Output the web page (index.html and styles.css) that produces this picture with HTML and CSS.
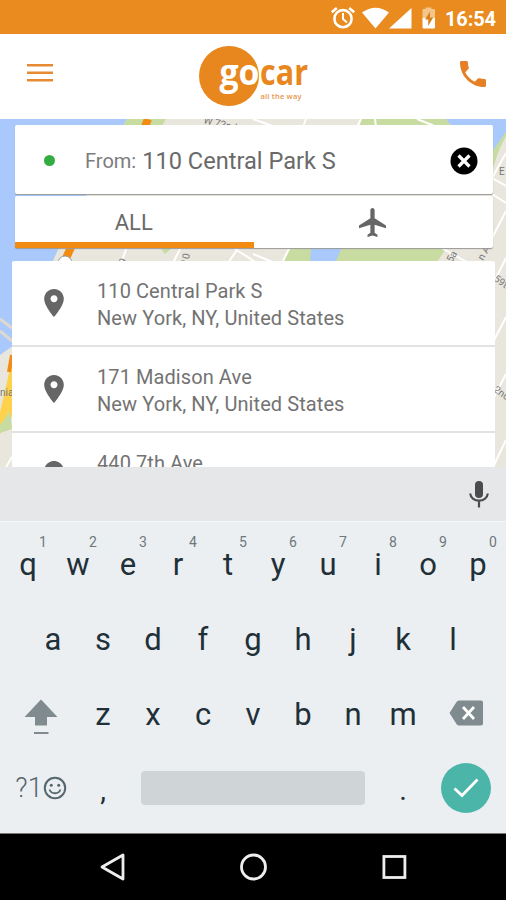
FILE: index.html
```html
<!DOCTYPE html>
<html lang="en">
<head>
<meta charset="utf-8">
<title>gocar</title>
<link rel="stylesheet" href="styles.css">
</head>
<body>
<div class="phone">
  <div class="status">
    <svg width="168" height="34" viewBox="330 0 168 34">
      <g fill="none" stroke="#fff" stroke-width="2.6">
        <circle cx="343" cy="18.700" r="8.600"/>
        <path d="M343 13v6l4 3.500" stroke-width="2"/>
        <path d="M331.800 12.300l5-4.200M354.200 12.300l-5-4.200"/>
      </g>
      <path fill="#fff" d="M362 12.500Q375.500 3 389 12.500L375.500 28.500zM411.500 8v20.500H389z"/>
      <path fill="#f5c68c" d="M422.500 10q0-1 1-1h2V7.500h6V9h2.500q1 0 1 1v8h-12.500z"/>
      <path fill="#fff" d="M422.500 18H435v9.500q0 1-1 1h-10.500q-1 0-1-1z"/>
      <path fill="#d9821c" d="M430 11.500l-5 8h3.200v6.500l5-8.500H430z"/>
      <text class="clock" x="445" y="26" textLength="51">16:54</text>
    </svg>
  </div>
  <header class="header">
    <svg class="menu" width="28" height="20" viewBox="0 0 28 20"><path stroke="#e68a34" stroke-width="2.600" d="M1 2.300h26M1 9.800h26M1 17.300h26"/></svg>
    <svg class="logo" width="114" height="64" viewBox="197 43 114 64">
      <circle cx="229" cy="76" r="30" fill="#e8871e"/>
      <text class="brand on" x="219.500" y="85" textLength="40" lengthAdjust="spacingAndGlyphs">go</text>
      <text class="brand" x="260" y="85" textLength="48" lengthAdjust="spacingAndGlyphs">car</text>
      <text class="slogan" x="260.500" y="98.500" textLength="41">all the way</text>
    </svg>
    <svg class="call" width="26" height="26" viewBox="3 3 18 18"><path fill="#e58024" d="M6.620 10.790c1.440 2.830 3.760 5.140 6.590 6.590l2.200-2.200c.27-.27.67-.36 1.020-.24 1.120.37 2.330.57 3.570.57.55 0 1 .45 1 1V20c0 .55-.45 1-1 1-9.390 0-17-7.610-17-17 0-.55.45-1 1-1h3.500c.55 0 1 .45 1 1 0 1.250.2 2.450.57 3.570.11.35.03.74-.25 1.020l-2.200 2.200z"/></svg>
  </header>
  <main class="stage">
    <svg class="map" width="506" height="348" viewBox="0 119 506 348">
      <path fill="#e9e6dd" d="M0 119h506v348H0z"/>
      <path fill="#a9c9fc" d="M0 119h127L60 245 52 263 14 345 0 355z"/>
      <path fill="#c8dca2" d="M127 119h39l-8 14h-39zM361 119h145v10l-20 60H350zM290 247h157l-12 18H281zM160 247h13l-8 7z"/>
      <path fill="#a9c9fc" d="M446 119h60v10l-24 48-28-48zM311 247h31l-8 18h-24z"/>
      <path fill="#c8dca2" d="M506 136l-24 48 6-38 18-27z"/>
      <path fill="#a9c9fc" d="M488 119h18v13l-17 24z"/>
      <path fill="none" stroke="#f28c13" stroke-width="8" d="M148 119l-4 10M72 245l-9 20"/>
      <path fill="#ffd24d" d="M12 360L0 412v22l12-18z"/>
      <path fill="none" stroke="#f28c13" stroke-width="4" d="M12 355l-3 17"/>
      <path fill="#c8dca2" d="M0 425l10-14 2 18-12 4z"/>
      <g fill="none" stroke="#fff" stroke-width="2">
        <path d="M253 119l28 10M306 119l-3 8M361 119l-5 10M417 119l25 10M375 119l1 8M181 247l-8 16M127 247l-6 16M239 247l-11 16M232 247l25 16M253 254l22 9M290 247l-9 18M440 247l32 18M506 153l-14 25M492 178l14 8M492 194l14 9M506 211l-14 27M506 258l-14 28M506 317l-14 27M506 374l-14 27M506 440l-12 25M12 457l-6 10"/>
        <path stroke="#ddd9d0" stroke-width="3" d="M0 319l12 9M0 331l12 10"/>
      </g>
      <circle cx="65" cy="263" r="7" fill="#fff" stroke="#999"/>
      <g class="road">
        <text x="203" y="123" transform="rotate(14 203 123)">W 72nd</text>
        <text x="125" y="265" transform="rotate(-70 125 265)">9</text>
        <text x="188" y="265" transform="rotate(-80 188 265)">10</text>
        <text x="452" y="263" transform="rotate(-60 452 263)">5a</text>
        <text x="483" y="261" transform="rotate(-60 483 261)">n A</text>
        <text x="499" y="175">E</text>
        <text x="493" y="280" transform="rotate(35 493 280)">59th</text>
        <text x="493" y="391" transform="rotate(35 493 391)">2nd</text>
        <text x="0" y="396">nia</text>
      </g>
    </svg>
    <section class="panel">
      <div class="from card">
        <span class="dot"></span>
        <span class="label">From:</span>
        <span class="address">110 Central Park S</span>
        <svg class="clear" width="28" height="28" viewBox="0 0 28 28"><circle cx="14" cy="14" r="13.500"/><path stroke="#fff" stroke-width="3.200" d="M8.500 8.500l11 11M19.500 8.500l-11 11"/></svg>
      </div>
      <div class="tabs card">
        <div class="tab active">ALL</div>
        <div class="tab plane"><svg width="27" height="29" viewBox="2 2 19 20" preserveAspectRatio="none"><path fill="#666" d="M21 16v-2l-8-5V3.500c0-.83-.67-1.500-1.500-1.500S10 2.670 10 3.500V9l-8 5v2l8-2.500V19l-2 1.500V22l3.500-1 3.500 1v-1.500L13 19v-5.500l8 2.500z"/></svg></div>
      </div>
    </section>
    <section class="results">
      <div class="row">
        <svg class="pin" width="20" height="28" viewBox="5 2 14 20"><path d="M12 2C8.130 2 5 5.130 5 9c0 5.250 7 13 7 13s7-7.750 7-13c0-3.870-3.130-7-7-7zm0 9.500c-1.380 0-2.500-1.120-2.500-2.500s1.120-2.500 2.500-2.500 2.500 1.120 2.500 2.500-1.120 2.500-2.500 2.500z"/></svg>
        <div class="place"><div class="street">110 Central Park S</div><div>New York, NY, United States</div></div>
      </div>
      <div class="row">
        <svg class="pin" width="20" height="28" viewBox="5 2 14 20"><path d="M12 2C8.130 2 5 5.130 5 9c0 5.250 7 13 7 13s7-7.750 7-13c0-3.870-3.130-7-7-7zm0 9.500c-1.380 0-2.500-1.120-2.500-2.500s1.120-2.500 2.500-2.500 2.500 1.120 2.500 2.500-1.120 2.500-2.500 2.500z"/></svg>
        <div class="place"><div class="street">171 Madison Ave</div><div>New York, NY, United States</div></div>
      </div>
      <div class="row">
        <svg class="pin" width="20" height="28" viewBox="5 2 14 20"><path d="M12 2C8.130 2 5 5.130 5 9c0 5.250 7 13 7 13s7-7.750 7-13c0-3.870-3.130-7-7-7zm0 9.500c-1.380 0-2.500-1.120-2.500-2.500s1.120-2.500 2.500-2.500 2.500 1.120 2.500 2.500-1.120 2.500-2.500 2.500z"/></svg>
        <div class="place"><div class="street">440 7th Ave</div></div>
      </div>
    </section>
  </main>
  <div class="suggest">
    <svg width="20" height="28" viewBox="0 0 20 28"><rect x="6" y="1" width="8" height="17" rx="4" fill="#4a4c4e"/><path fill="none" stroke="#4a4c4e" stroke-width="2.200" d="M1.200 13.500C2 23 18 23 18.800 13.500M10 21v6.500"/></svg>
  </div>
  <div class="keyboard">
    <div class="keys ten">
      <span>q<sup>1</sup></span><span>w<sup>2</sup></span><span>e<sup>3</sup></span><span>r<sup>4</sup></span><span>t<sup>5</sup></span><span>y<sup>6</sup></span><span>u<sup>7</sup></span><span>i<sup>8</sup></span><span>o<sup>9</sup></span><span>p<sup>0</sup></span>
    </div>
    <div class="keys nine">
      <span>a</span><span>s</span><span>d</span><span>f</span><span>g</span><span>h</span><span>j</span><span>k</span><span>l</span>
    </div>
    <div class="keys third">
      <span><svg width="34" height="38" viewBox="0 0 34 38"><path fill="#7f8b8e" d="M17 3.500L33.500 21H23v8.500H11V21H.5zM10 36h14.500v2H10z"/></svg></span>
      <span>z</span><span>x</span><span>c</span><span>v</span><span>b</span><span>n</span><span>m</span>
      <span class="erase"><svg width="34" height="26" viewBox="0 0 34 26"><path fill="#7f8b8e" d="M10 .5h22q2 0 2 2v21q0 2-2 2H10q-1.500 0-2.500-1.500L.5 13l7-11Q8.500.5 10 .5z"/><path stroke="#fff" stroke-width="2.800" d="M14 7l11 12M25 7L14 19"/></svg></span>
    </div>
    <div class="keys bottom">
      <span class="mode">?1<svg width="24" height="24" viewBox="0 0 24 24"><circle cx="12" cy="12" r="10.200" fill="none" stroke="#56666d" stroke-width="2"/><circle cx="8.300" cy="9.300" r="1.500" fill="#56666d"/><circle cx="15.700" cy="9.300" r="1.500" fill="#56666d"/><path fill="none" stroke="#56666d" stroke-width="1.800" d="M6.500 13.500c2 5 9 5 11 0"/></svg></span>
      <span class="comma">,</span>
      <span class="space"></span>
      <span class="period">.</span>
      <span class="done"><svg width="26" height="20" viewBox="0 0 26 20"><path fill="none" stroke="#fff" stroke-width="2.800" d="M1.500 10.500l7.500 7L24.500 1.500"/></svg></span>
    </div>
  </div>
  <nav class="nav">
    <svg width="26" height="30" viewBox="0 0 26 30"><path fill="none" stroke="#eee" stroke-width="2.800" stroke-linejoin="round" d="M24 3v24L3 15z"/></svg>
    <svg width="28" height="30" viewBox="0 0 28 30"><circle cx="14.500" cy="15" r="12" fill="none" stroke="#eee" stroke-width="2.800"/></svg>
    <svg width="26" height="30" viewBox="0 0 26 30"><rect x="2.900" y="4.500" width="21" height="21" fill="none" stroke="#eee" stroke-width="2.800"/></svg>
  </nav>
</div>
</body>
</html>
```
FILE: styles.css
```css
* { box-sizing: border-box; }
body { margin: 0; font-family: Roboto, sans-serif; color: #6a6a6a; }
.phone { width: 506px; height: 900px; display: flex; flex-direction: column; overflow: hidden; }
svg { display: block; flex: none; }

.status { height: 34px; background: #e98b1e; display: flex; justify-content: flex-end; padding-right: 8px; }
.clock { font: 700 20px Roboto, sans-serif; fill: #fff; }

.header { height: 85px; background: #fff; display: flex; align-items: center; justify-content: space-between; padding: 0 20px 0 26px; }
.menu { margin-top: -7px; }
.logo { margin: -4px 0 0 -7px; }
.call { margin-top: -6px; }
.brand { font: 700 36px "Open Sans", sans-serif; fill: #e8871e; }
.brand.on { fill: #fff; }
.slogan { font: 600 7.500px "Open Sans", sans-serif; fill: #e8954a; }

.stage { height: 348px; position: relative; overflow: hidden; padding-top: 6px; }
.map { position: absolute; left: 0; top: 0; }
.road { font: 10px Roboto, sans-serif; fill: #777; }
.panel { position: relative; margin: 0 13px 0 15px; }
.card { background: #fff; border-radius: 2px; }
.from { height: 69px; display: flex; align-items: center; padding: 2px 15px 0 29px; box-shadow: 0 1px 1px #999; }
.dot { width: 11px; height: 11px; border-radius: 50%; background: #33ad41; margin-right: 30px; }
.label { font-size: 20px; margin-right: 6px; color: #7c7c7c; }
.address { font-size: 23.6px; padding-top: 1px; flex: 1; white-space: nowrap; }
.tabs { margin-top: 2px; height: 52px; display: flex; box-shadow: 0 1px 1px #999; }
.tab { flex: 1; display: flex; align-items: center; justify-content: center; font-size: 22px; }
.tab.active { border-bottom: 6px solid #f18b12; padding: 7px 1px 0 0; }
.plane { padding-right: 2px; }

.results { position: relative; margin: 13px 11px 0 12px; height: 206px; overflow: hidden; background: #fff; border-radius: 2px 2px 0 0; }
.row { height: 86px; border-bottom: 2px solid #e2e2e2; display: flex; padding: 0 0 0 32px; }
.pin { margin: 28px 33px 0 0; fill: #666; }
.place { padding-top: 17px; font-size: 20px; line-height: 27px; white-space: nowrap; letter-spacing: .08px; color: #737373; }

.suggest { height: 54px; background: #e5e7e9; display: flex; align-items: center; justify-content: flex-end; padding-right: 17px; }
.keyboard { height: 312px; background: #eceff1; border-top: 1px solid #f3f5f6; padding-top: 5px; }
.keys { height: 75px; display: grid; align-items: center; justify-items: center; font-size: 31px; line-height: 36px; color: #1f3039; }
.keys span { position: relative; }
.ten { grid-template-columns: repeat(10, 50px); padding-left: 3px; }
.nine { grid-template-columns: repeat(9, 50px); padding-left: 28px; }
.third { grid-template-columns: 75px repeat(7, 50px) 75px; padding-left: 3px; }
.third .erase { margin-bottom: 4px; }
.ten sup { position: absolute; left: calc(50% + 11px); top: -13px; font-size: 14px; line-height: 16px; color: #6c787d; }
.bottom { grid-template-columns: 78px 46px 254px 46px 80px; padding-left: 2px; }
.bottom .mode { display: flex; align-items: center; font-size: 27px; color: #56666d; font-weight: 300; margin: 0 0 3px 0; }
.comma, .period { font-size: 29px; }
.space { width: 224px; height: 34px; border-radius: 4px; background: #cfd4d7; margin-bottom: 3px; }
.done { width: 50px; height: 50px; border-radius: 50%; background: #4cb5a9; display: flex; align-items: center; justify-content: center; margin-bottom: 4px; }

.nav { height: 67px; background: #000; display: flex; align-items: center; justify-content: center; gap: 114px; border-top: 1px solid #777; }
```
